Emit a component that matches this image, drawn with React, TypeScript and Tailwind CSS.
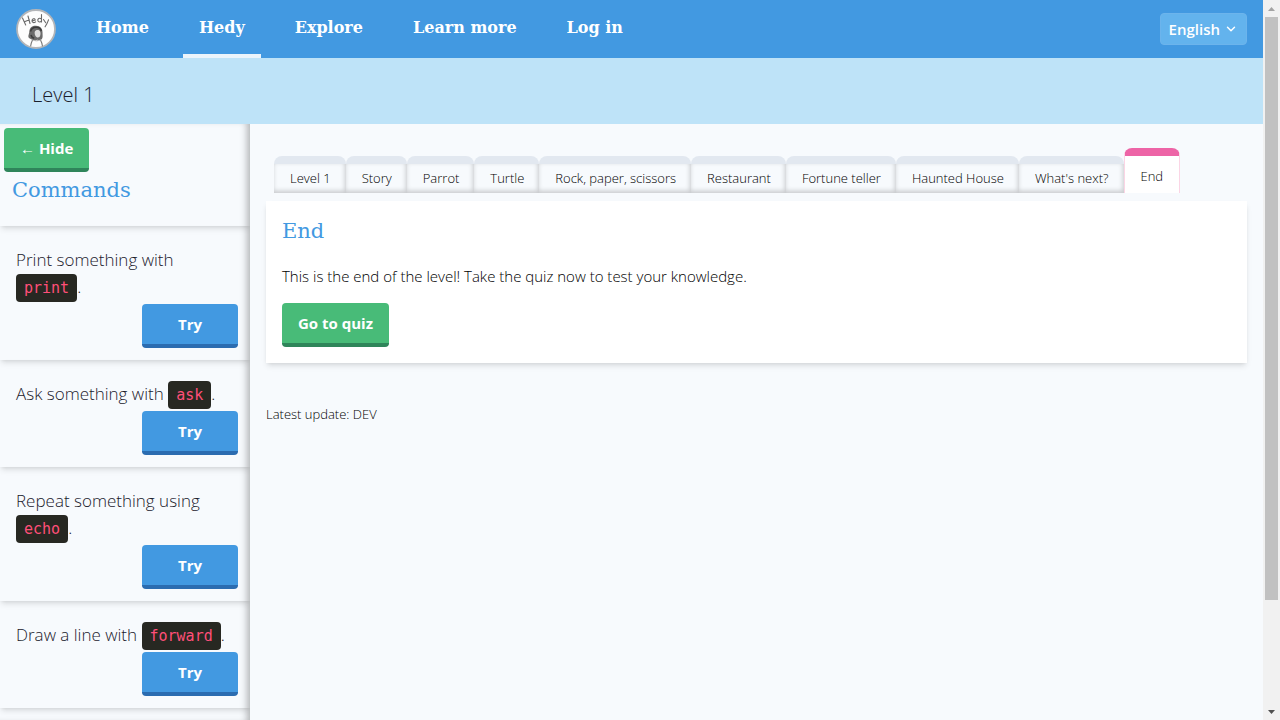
import { ChevronDown } from "lucide-react";

const navLinks = ["Home", "Hedy", "Explore", "Learn more", "Log in"];

const commands = [
  { text: "Print something with", code: "print" },
  { text: "Ask something with", code: "ask" },
  { text: "Repeat something using", code: "echo" },
  { text: "Draw a line with", code: "forward" },
];

const tabs = [
  "Level 1",
  "Story",
  "Parrot",
  "Turtle",
  "Rock, paper, scissors",
  "Restaurant",
  "Fortune teller",
  "Haunted House",
  "What's next?",
  "End",
];

function Logo() {
  return (
    <svg viewBox="0 0 40 40" className="h-10 w-10" role="img" aria-label="Hedy logo">
      <circle cx="20" cy="20" r="19" fill="#fdfdfd" stroke="#b3b5b8" strokeWidth="1.8" />
      <g fill="none" stroke="#6a6a6a" strokeWidth="1.1" strokeLinecap="round">
        <path d="M6.500 9l3.200 7M12 7l2 7.500M8.500 12.800l4.800-2" />
        <path d="M16 12l3.200-1c0-2-3.200-1.800-3.200.8 0 2.200 2.200 2.200 3.600 1" />
        <path d="M25.500 5.500v7.500M25.500 10c-2-1.800-4.200 0-3.600 1.900.5 1.500 2.600 1.400 3.600 0" />
        <path d="M27.500 10.500l2.200 3.200M32.500 10.800c-1 3-2 4.800-3.400 7" />
      </g>
      <path d="M16.500 31c-1 2-1.600 4-1.900 6.300M24.500 31c1.100 2 1.700 4 2 6.300" fill="none" stroke="#777" strokeWidth="1.1" />
      <path d="M17 31c2 1 5 1 7 0" fill="none" stroke="#aaa" />
      <path d="M13 29c-1.500-2 .3-4 .3-6.500C13.800 18 17 16.500 20 16.800c4.500 0 6.500 3 6.500 6.500 0 3 .6 5-.7 7-1.500.8-3 .7-4.300.4-3 .8-6.500.1-8.500-1.700z" fill="#6a6a6a" />
      <path d="M14.500 22.500c.8-2.800 3-4.200 5.500-4.200 3 0 4.800 1.500 5.300 3.700M15 26c.4 1.800 1.600 2.800 3.200 3.300" fill="none" stroke="#3c3c3c" strokeWidth="1.600" />
      <path d="M18.700 23c.8-2.300 4.700-2.700 5.600 0 .6 2.700-.2 5.300-2.300 5.500-2.100.1-3.600-2.700-3.300-5.500z" fill="#dcdcdc" />
    </svg>
  );
}

function Scrollbar() {
  return (
    <div aria-hidden="true" className="flex w-[17px] shrink-0 flex-col items-center justify-between bg-[#f1f1f1]">
      <div className="flex h-[17px] items-center">
        <svg viewBox="0 0 7 4" className="h-1 w-[7px]"><path d="M0 4L3.500 0L7 4z" fill="#a3a3a3" /></svg>
      </div>
      <div className="flex w-full flex-1 flex-col items-center">
        <div className="h-[85%] w-[13px] bg-[#c1c1c1]" />
      </div>
      <div className="flex h-[17px] items-center">
        <svg viewBox="0 0 7 4" className="h-1 w-[7px]"><path d="M0 0L3.500 4L7 0z" fill="#505050" /></svg>
      </div>
    </div>
  );
}

export default function App() {
  return (
    <div className="flex h-screen overflow-hidden bg-[#f7fafd] font-['Open_Sans','Noto_Sans',sans-serif] font-light text-black">
      <div className="flex min-w-0 flex-1 flex-col">
        <header className="flex h-[58px] shrink-0 items-center bg-[#4299e1] px-4">
          <Logo />
          <nav className="ml-6 flex flex-1 gap-[18px] self-stretch">
            {navLinks.map((label) => (
              <a
                key={label}
                href="#"
                className={`border-b-4 px-4 pt-3 font-['DejaVu_Serif',serif] text-base leading-8 font-bold text-white ${
                  label === "Hedy" ? "border-[#ebf4fb]" : "border-transparent"
                }`}
              >
                {label}
              </a>
            ))}
          </nav>
          <button className="flex h-8 items-center gap-1 rounded border border-[#6cb4ec] bg-[#63b3ed] px-2 text-[15px] font-semibold text-white">
            English
            <ChevronDown size={14} strokeWidth={2.5} />
          </button>
        </header>

        <div className="flex h-[66px] shrink-0 items-center bg-[#bee3f8] px-8 pt-2 text-xl text-[#1a202c]">Level 1</div>

        <div className="flex min-h-0 flex-1">
          <aside className="w-[250px] shrink-0 overflow-hidden shadow-[inset_-7px_0_7px_-4px_rgba(0,0,0,0.28)]">
            <div className="h-[102px] p-1 shadow-md">
              <button className="h-11 rounded border-b-4 border-[#2f855a] bg-[#48bb78] px-4 text-[15px] font-bold text-white">
                ← Hide
              </button>
              <h2 className="px-2 font-['DejaVu_Serif',serif] text-[21px] leading-9 font-normal text-[#4299e1]">Commands</h2>
            </div>
            {commands.map(({ text, code }) => (
              <div key={code} className="pt-5 pr-3 pb-3 pl-4 shadow-md">
                <p className="text-[17px] leading-[27px] text-[#1a202c]">
                  {text}{" "}
                  <code className="rounded bg-[#272822] px-2 py-[5px] font-['DejaVu_Sans_Mono',monospace] text-[15px] leading-none font-normal text-[#ff4f79]">
                    {code}
                  </code>
                  .
                </p>
                <button className="mt-1 ml-auto block h-11 w-24 rounded border-b-4 border-[#2b6cb0] bg-[#4299e1] text-[15px] font-bold text-white">
                  Try
                </button>
              </div>
            ))}
            <div className="h-24" />
          </aside>

          <main className="min-w-0 flex-1 px-4 pt-6">
            <div role="tablist" className="flex items-end px-2 text-[13px]">
              {tabs.map((label) =>
                label === "End" ? (
                  <button
                    key={label}
                    role="tab"
                    aria-selected="true"
                    className="h-[45px] rounded-t-lg border-x border-t-8 border-x-[#fbd5e5] border-t-[#ed64a6] bg-white px-4 pt-1 whitespace-nowrap"
                  >
                    {label}
                  </button>
                ) : (
                  <button
                    key={label}
                    role="tab"
                    aria-selected="false"
                    className="h-[37px] rounded-t-lg border-t-8 border-[#e2e8f0] pt-px pr-[15px] pl-4 whitespace-nowrap shadow-[inset_-1px_-2px_5px_rgba(0,0,0,0.2)]"
                  >
                    {label}
                  </button>
                ),
              )}
            </div>
            <section className="mt-2 bg-white p-4 shadow-md">
              <h1 className="font-['DejaVu_Serif',serif] text-[21px] leading-7 font-normal text-[#4299e1]">End</h1>
              <p className="mt-4 text-[15px] leading-[30px]">
                This is the end of the level! Take the quiz now to test your knowledge.
              </p>
              <button className="mt-3 h-11 rounded border-b-4 border-[#2f855a] bg-[#48bb78] px-4 text-[15px] font-bold text-white">
                Go to quiz
              </button>
            </section>
            <footer className="mt-10 text-[13px] leading-[22px]">Latest update: DEV</footer>
          </main>
        </div>
      </div>
      <Scrollbar />
    </div>
  );
}
